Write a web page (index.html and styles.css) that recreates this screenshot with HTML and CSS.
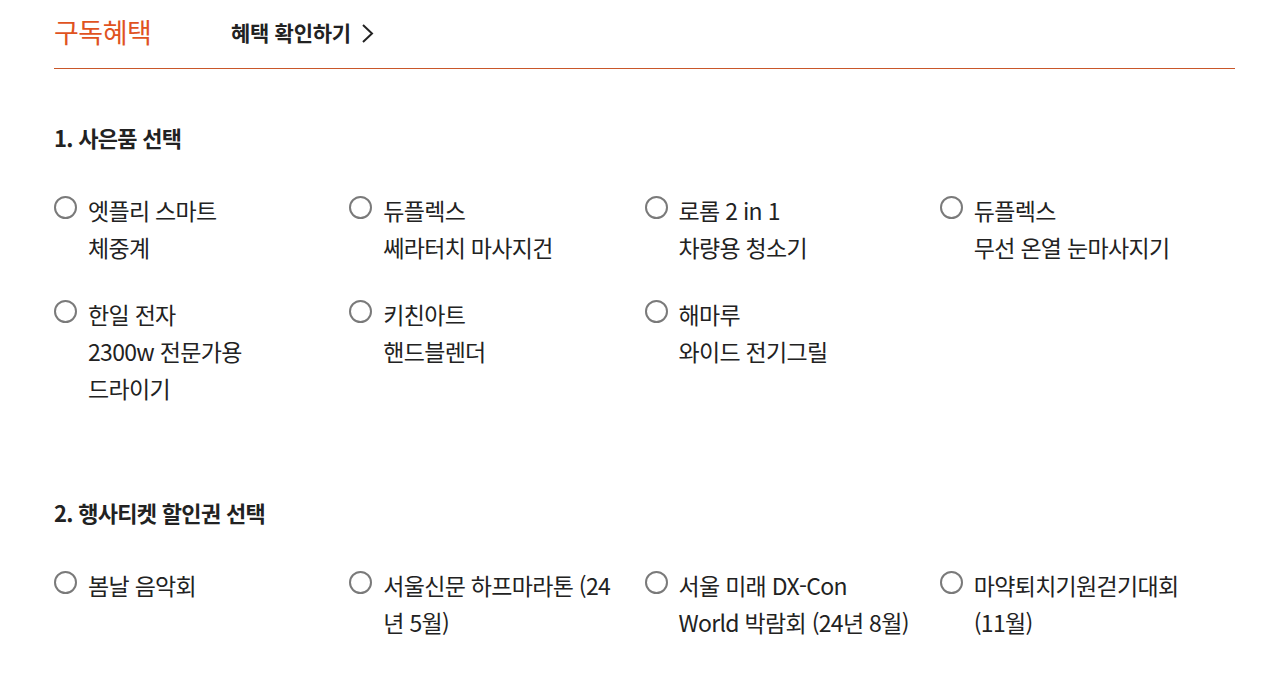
FILE: index.html
```html
<!DOCTYPE html>
<html lang="ko">
<head>
    <meta charset="utf-8">
    <title>구독혜택</title>
    <link rel="stylesheet" href="styles.css">
</head>
<body>
    <div class="container">
        <div class="header">
            <h2 class="header-title">구독혜택</h2>
            <a href="#" class="header-link">
                혜택 확인하기
                <svg class="chevron" width="14" height="24" viewBox="0 0 14 24">
                    <polyline points="2,4 11,12.5 2,21" fill="none" stroke="#222" stroke-width="2"/>
                </svg>
            </a>
        </div>

        <div class="section section-first">
            <h3 class="section-title">1. 사은품 선택</h3>
            <div class="option-grid">
                <label class="option"><span class="radio"></span><span class="option-text">엣플리 스마트<br>체중계</span></label>
                <label class="option"><span class="radio"></span><span class="option-text">듀플렉스<br>쎄라터치 마사지건</span></label>
                <label class="option"><span class="radio"></span><span class="option-text">로롬 2 in 1<br>차량용 청소기</span></label>
                <label class="option"><span class="radio"></span><span class="option-text">듀플렉스<br>무선 온열 눈마사지기</span></label>
                <label class="option"><span class="radio"></span><span class="option-text">한일 전자<br>2300w 전문가용<br>드라이기</span></label>
                <label class="option"><span class="radio"></span><span class="option-text">키친아트<br>핸드블렌더</span></label>
                <label class="option"><span class="radio"></span><span class="option-text">해마루<br>와이드 전기그릴</span></label>
            </div>
        </div>

        <div class="section section-second">
            <h3 class="section-title">2. 행사티켓 할인권 선택</h3>
            <div class="option-grid">
                <label class="option"><span class="radio"></span><span class="option-text">봄날 음악회</span></label>
                <label class="option"><span class="radio"></span><span class="option-text">서울신문 하프마라톤 (24<br>년 5월)</span></label>
                <label class="option"><span class="radio"></span><span class="option-text">서울 미래 DX-Con<br>World 박람회 (24년 8월)</span></label>
                <label class="option"><span class="radio"></span><span class="option-text">마약퇴치기원걷기대회<br>(11월)</span></label>
            </div>
        </div>
    </div>
</body>
</html>
```

FILE: styles.css
```css
* {
    margin: 0;
    padding: 0;
    box-sizing: border-box;
    font-family: 'Noto Sans CJK KR', 'Noto Sans', sans-serif;
}

body {
    background-color: #fff;
    color: #222;
}

.container {
    padding: 0 34px 0 54px;
}

.header {
    display: flex;
    align-items: center;
    padding: 14px 0 18px;
    border-bottom: 1px solid #c9572a;
}

.header-title {
    width: 177px;
    font-size: 27px;
    line-height: 36px;
    font-weight: 400;
    letter-spacing: -0.5px;
    color: #e0531f;
}

.header-link {
    display: inline-flex;
    align-items: center;
    gap: 10px;
    font-size: 21px;
    line-height: 36px;
    font-weight: 700;
    letter-spacing: -0.3px;
    color: #222;
    text-decoration: none;
}

.chevron {
    margin-top: 2px;
}

.section-first {
    margin-top: 53px;
}

.section-second {
    margin-top: 90px;
}

.section-title {
    font-size: 22px;
    line-height: 30px;
    font-weight: 700;
    letter-spacing: -0.7px;
    color: #222;
}

.option-grid {
    display: grid;
    grid-template-columns: repeat(4, 1fr);
    row-gap: 30px;
    margin-top: 40px;
}

.option {
    display: flex;
    gap: 11px;
    cursor: pointer;
}

.radio {
    flex: none;
    width: 23px;
    height: 23px;
    margin-top: 4px;
    border: 2px solid #7a7a7a;
    border-radius: 50%;
}

.option-text {
    font-size: 23px;
    line-height: 37px;
    letter-spacing: -0.7px;
    color: #222;
}
```
